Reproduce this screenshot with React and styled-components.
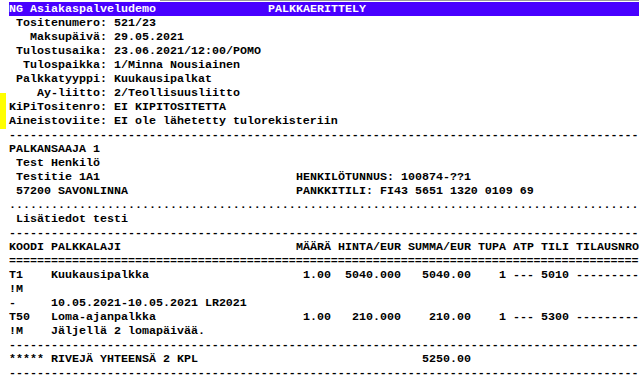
import React from 'react'
import styled, {createGlobalStyle} from 'styled-components'

const CH = 7
const ch = n => `${n * CH}px`
const WIDTH = 90

const GlobalStyle = createGlobalStyle`
  html, body {
    margin: 0;
    background: #fff;
  }
  body {
    font-family: "Liberation Mono", "Courier New", monospace;
    font-size: 11.6667px;
    font-weight: bold;
    line-height: 14px;
    color: #000;
  }
`

const Page = styled.div`
  position: relative;
  width: ${ch(WIDTH)};
  padding: 2px 0 0 9px;
  white-space: pre;
`

const TopEdge = styled.div`
  position: absolute;
  top: 0;
  left: 160px;
  right: 0;
  height: 1px;
  background: #9a9a9a;
`

const ChangeMarker = styled.div`
  position: absolute;
  left: 0;
  top: 93px;
  width: 6px;
  height: 36px;
  background: #ffff00;
`

const TitleBar = styled.div`
  display: flex;
  height: 14px;
  background: #4800ff;
  color: #fff;
`

const TitleLeft = styled.span`
  flex: 0 0 ${ch(37)};
`

const FieldList = styled.div`
  display: grid;
  grid-template-columns: ${ch(14)} 1fr;
  column-gap: ${ch(1)};
`

const FieldLabel = styled.span`
  text-align: right;
`

const Line = styled.div`
  height: 14px;
  padding-left: ${({indent}) => ch(indent || 0)};
  overflow: hidden;
`

const Rule = ({char}) => <Line>{char.repeat(WIDTH)}</Line>

const SplitRow = styled.div`
  display: grid;
  grid-template-columns: ${ch(41)} 1fr;
  height: 14px;
`

const TableRow = styled.div`
  display: grid;
  grid-template-columns: ${[5, 34, 5, 9, 9, 4, 3, 4, 9].map(ch).join(' ')};
  column-gap: ${ch(1)};
  height: 14px;
`

const Cell = styled.span`
  text-align: ${({num}) => (num ? 'right' : 'left')};
  grid-column: ${({span}) => (span ? `span ${span}` : 'auto')};
`

const fields = [
  ['Tositenumero:', '521/23'],
  ['Maksupäivä:', '29.05.2021'],
  ['Tulostusaika:', '23.06.2021/12:00/POMO'],
  ['Tulospaikka:', '1/Minna Nousiainen'],
  ['Palkkatyyppi:', 'Kuukausipalkat'],
  ['Ay-liitto:', '2/Teollisuusliitto'],
  ['KiPiTositenro:', 'EI KIPITOSITETTA'],
  ['Aineistoviite:', 'EI ole lähetetty tulorekisteriin'],
]

const columns = ['MÄÄRÄ', 'HINTA/EUR', 'SUMMA/EUR', 'TUPA', 'ATP', 'TILI', 'TILAUSNRO']

const rows = [
  {code: 'T1', name: 'Kuukausipalkka', values: ['1.00', '5040.000', '5040.00', '1', '---', '5010', '---------']},
  {code: '!M'},
  {code: '-', name: '10.05.2021-10.05.2021 LR2021'},
  {code: 'T50', name: 'Loma-ajanpalkka', values: ['1.00', '210.000', '210.00', '1', '---', '5300', '---------']},
  {code: '!M', name: 'Jäljellä 2 lomapäivää.'},
]

const PayRow = ({code, name, values}) => (
  <TableRow>
    <Cell>{code}</Cell>
    <Cell span={values ? 1 : 8}>{name || ''}</Cell>
    {values &&
      values.map((v, i) => (
        <Cell key={i} num={i < 4}>
          {v}
        </Cell>
      ))}
  </TableRow>
)

export default function App() {
  return (
    <>
      <GlobalStyle />
      <Page>
        <TopEdge />
        <ChangeMarker />
        <TitleBar>
          <TitleLeft>NG Asiakaspalveludemo</TitleLeft>
          <span>PALKKAERITTELY</span>
        </TitleBar>

        <FieldList>
          {fields.map(([label, value]) => (
            <React.Fragment key={label}>
              <FieldLabel>{label}</FieldLabel>
              <span>{value}</span>
            </React.Fragment>
          ))}
        </FieldList>
        <Rule char="-" />

        <Line>PALKANSAAJA 1</Line>
        <Line indent={1}>Test Henkilö</Line>
        <SplitRow>
          <Line indent={1}>Testitie 1A1</Line>
          <span>HENKILÖTUNNUS: 100874-??1</span>
        </SplitRow>
        <SplitRow>
          <Line indent={1}>57200 SAVONLINNA</Line>
          <span>PANKKITILI: FI43 5651 1320 0109 69</span>
        </SplitRow>
        <Rule char="." />
        <Line indent={1}>Lisätiedot testi</Line>
        <Rule char="-" />

        <TableRow>
          <Cell>KOODI</Cell>
          <Cell>PALKKALAJI</Cell>
          {columns.map(c => (
            <Cell key={c}>{c}</Cell>
          ))}
        </TableRow>
        <Rule char="=" />
        {rows.map((r, i) => (
          <PayRow key={i} {...r} />
        ))}
        <Rule char="-" />
        <TableRow>
          <Cell>*****</Cell>
          <Cell span={2}>RIVEJÄ YHTEENSÄ 2 KPL</Cell>
          <Cell />
          <Cell num>5250.00</Cell>
        </TableRow>
        <Rule char="-" />
      </Page>
    </>
  )
}
